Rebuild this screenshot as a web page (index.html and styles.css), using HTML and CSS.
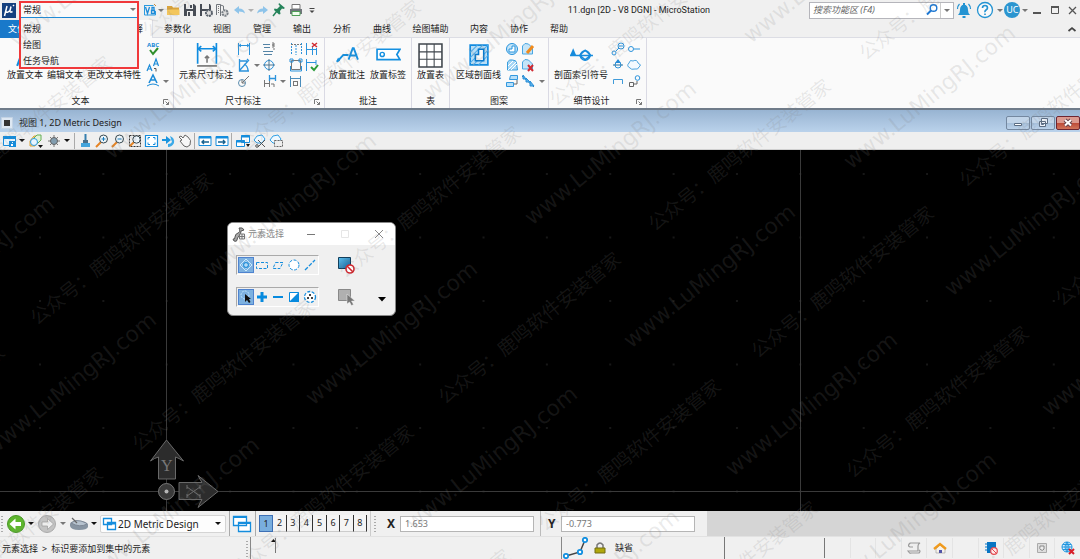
FILE: index.html
```html
<!DOCTYPE html>
<html lang="zh-CN">
<head>
<meta charset="utf-8">
<title>11.dgn [2D - V8 DGN] - MicroStation</title>
<link rel="stylesheet" href="styles.css">
</head>
<body>
<div class="app">
  <header class="titlebar">
    <div class="quick">
      <svg class="logo" viewBox="0 0 14 15"><path fill="#14407f" d="M0 0h14v15H0z"/><path d="M5 3 2.500 13M4 8.500q1 2 4-1L9 3.500M8 8q0 2 2.500.5M11 3l1-1" stroke="#fff" stroke-width="1.500" fill="none"/></svg>
      <div class="workflow">
        <select class="workflow-select" aria-label="工作流"><option>常规</option><option>绘图</option><option>任务导航</option></select>
        <i class="caret gray"></i>
        <ul class="workflow-menu"><li>常规</li><li>绘图</li><li>任务导航</li></ul>
      </div>
      <button class="tool" aria-label="V8"><svg class="ic" viewBox="0 0 16 16"><path d="M2.500 3.500h9M2.500 3v10h11V9" fill="none" stroke="#2a9be0"/><path d="m3.500 5 2 6.500 2-6.500M9.500 8.500h3v3h-3zM10 5.500h2v3h-2z" fill="none" stroke="#1d8bd8" stroke-width="1.300"/><path d="m12 2 2 2" stroke="#c78a3a"/></svg></button>
      <i class="caret gray"></i>
      <button class="tool wide" aria-label="打开"><svg class="ic" viewBox="0 0 16 16"><path d="M2 13V4h5l1 1.500h6V13z" fill="#d9a33c"/><path d="M2 13V7.500h12.500V13z" fill="#f3c65c"/></svg></button>
      <button class="tool" aria-label="保存"><svg class="ic" viewBox="0 0 16 16"><path d="M2 2h10l2 2v10H2z" fill="#474c55"/><path d="M4 2h7v5H4zM5 9h6v5H5z" fill="#eee"/><path d="M8 3h2v3H8zM6 10h2v4H6z" fill="#474c55"/></svg></button>
      <button class="tool" aria-label="保存设置"><svg class="ic" viewBox="0 0 16 16"><path d="M2 2h10l1 2v10H2z" fill="#474c55"/><path d="M4 2h7v5H4zM4 9h5v5H4z" fill="#eee"/><circle cx="11" cy="11" r="3" fill="#ddd" stroke="#59616b" stroke-width="2" stroke-dasharray="2 .7"/></svg></button>
      <button class="tool" aria-label="压缩"><svg class="ic" viewBox="0 0 16 16"><path d="M2.500 13V2.500h4V14M6.500 3l3 1v4" fill="none" stroke="#70757b"/><path d="M4.500 4v8" stroke="#777" stroke-dasharray="1"/><circle cx="11" cy="11" r="2.700" fill="#ddd" stroke="#7a8087" stroke-width="2" stroke-dasharray="2 .7"/></svg></button>
      <button class="tool wide" aria-label="撤销"><svg class="ic" viewBox="0 0 16 16"><path d="m3 8 5-4v2.500q5 0 6 5Q12 9.500 8 9.500V12z" fill="#8ec4ea"/></svg></button>
      <i class="caret light"></i>
      <button class="tool" aria-label="重做"><svg class="ic" viewBox="0 0 16 16"><path d="M14 8 9 4v2.500q-5 0-6 5 2-2 6-2V12z" fill="#8ec4ea"/></svg></button>
      <button class="tool wide" aria-label="固定"><svg class="ic" viewBox="0 0 16 16"><path d="m8 1 6 5-1.500 1L11 6.500 9 9l.5 3L8 12.500 3 8l.5-1.500L6 7l3-3-1.500-1.500z" fill="#25835a"/><path d="m6 9-4 5" stroke="#25835a" stroke-width="1.500"/></svg></button>
      <button class="tool" aria-label="打印"><svg class="ic" viewBox="0 0 16 16"><path d="M4 2.500h8V7H4z" fill="#fff" stroke="#777"/><path d="M2 7h12v5H2z" fill="#70757b"/><path d="M4 9.500h8v4H4z" fill="#f2fff0" stroke="#4d9e56"/></svg></button>
      <button class="tool" aria-label="自定义"><svg class="ic" viewBox="0 0 16 16"><path d="M5.500 6.500h5" stroke="#444"/><path d="M5.500 8.500h5L8 11z" fill="#444"/></svg></button>
    </div>
    <h1 class="doc-title">11.dgn [2D - V8 DGN] - MicroStation</h1>
    <div class="search">
      <input class="search-input" type="text" aria-label="搜索功能区" placeholder="搜索功能区 (F4)">
      <svg class="ic" viewBox="0 0 16 16"><circle cx="9.500" cy="6" r="3.300" fill="none" stroke="#1c77d2" stroke-width="1.400"/><path d="m7 8.500-4 4" stroke="#1c77d2" stroke-width="2"/></svg>
      <button class="search-more" aria-label="搜索选项"><i class="caret gray"></i></button>
    </div>
    <div class="account">
      <button class="tool round" aria-label="通知"><svg class="ic20" viewBox="0 0 20 20"><path d="M4 15q2-1.500 2-5 0-5 4-5.500Q14 5 14 10q0 3.500 2 5zM8.500 16h3v2h-3zM9 3h2v2H9z" fill="#2393d2"/><path d="M5.500 4Q3.500 6 3.500 9M14.500 4q2 2 2 5" fill="none" stroke="#2393d2" stroke-width="1.200"/></svg></button>
      <button class="tool round" aria-label="帮助"><svg class="ic20" viewBox="0 0 20 20"><circle cx="10" cy="10" r="7.500" fill="#fafafa" stroke="#2393d2" stroke-width="1.300"/><path d="M7.500 8q0-2.500 2.500-2.500T12.500 8q0 1-1.500 2t-1 2.300M10 13.500v1.600" fill="none" stroke="#2393d2" stroke-width="1.600"/></svg></button>
      <i class="caret gray"></i>
      <button class="avatar">UC</button>
      <i class="caret gray"></i>
      <button class="tool" aria-label="最小化"><svg class="ic" viewBox="0 0 16 16"><path d="M4 11h8" stroke="#555" stroke-width="2"/></svg></button>
      <button class="tool" aria-label="最大化"><svg class="ic" viewBox="0 0 16 16"><path d="M4.500 5v6.500h7V5" fill="none" stroke="#555"/><path d="M4 5h8" stroke="#555" stroke-width="2"/></svg></button>
      <button class="tool" aria-label="关闭"><svg class="ic" viewBox="0 0 16 16"><path d="m5 5 7 7m0-7-7 7" stroke="#555" stroke-width="1.300"/></svg></button>
    </div>
  </header>

  <nav class="tabs">
    <button class="tab file">文件</button>
    <button class="tab active">注释</button>
    <button class="tab t3">参数化</button><button class="tab">视图</button><button class="tab">管理</button><button class="tab">输出</button><button class="tab">分析</button><button class="tab">曲线</button><button class="tab t4">绘图辅助</button><button class="tab">内容</button><button class="tab">协作</button><button class="tab">帮助</button>
    <button class="collapse" aria-label="折叠功能区"><svg class="ic" viewBox="0 0 16 16"><path d="m4.500 10 3.500-3 3.500 3" fill="none" stroke="#444" stroke-width="1.700"/></svg></button>
  </nav>

  <section class="ribbon">
    <div class="group g-text">
      <div class="group-body">
        <button class="big"><svg class="ic24" viewBox="0 0 24 24"><path d="M4 22 11 3l7 19M7 15h8" fill="none" stroke="#0f8ce0" stroke-width="2"/></svg>放置文本</button>
        <button class="big"><svg class="ic24" viewBox="0 0 24 24"><path d="M4 22 11 3l7 19M7 15h8" fill="none" stroke="#0f8ce0" stroke-width="2"/></svg>编辑文本</button>
        <button class="big"><svg class="ic24" viewBox="0 0 24 24"><path d="M4 22 11 3l7 19M7 15h8" fill="none" stroke="#0f8ce0" stroke-width="2"/></svg>更改文本特性</button>
        <div class="small s-text">
          <svg class="ic" viewBox="0 0 16 16"><text class="abc" x="2" y="6">ABC</text><path d="m5 9 3 4 5-6" fill="none" stroke="#2f8f2b" stroke-width="2"/></svg><i></i>
          <svg class="ic" viewBox="0 0 16 16"><path d="m2 14 2.500-6L7 14M3 12h3M8.500 9 11 2l2.500 7M9.500 7h3" fill="none" stroke="#1b8bd8" stroke-width="1.200"/><path d="M9 11.500h2v3" fill="none" stroke="#555"/></svg><i></i>
          <svg class="ic" viewBox="0 0 16 16"><path d="m4 10 4-8 4 8M6 7h4" fill="none" stroke="#1b8bd8" stroke-width="1.600"/><path d="M2 13q6-4 12 0" fill="none" stroke="#1b8bd8"/></svg><i class="caret gray"></i>
        </div>
      </div>
      <div class="group-name">文本<svg class="launch" viewBox="0 0 8 8"><path d="M1.500 6V1.500H6M3.500 3.500l3 3M6.500 4v2.500H4" fill="none" stroke="#777"/></svg></div>
    </div>
    <div class="group g-dim">
      <div class="group-body">
        <button class="big"><svg class="ic24" viewBox="0 0 24 24"><path d="M3.500 0v20M21.500 0v20" stroke="#0f8ce0" stroke-width="1.600"/><path d="M5 5.500h15M7 3 4 5.500 7 8M18 3l3 2.500L18 8" fill="none" stroke="#0f8ce0" stroke-width="1.500"/><path d="M3 22h19" stroke="#777" stroke-width="1.600"/><path d="M12.500 19v-6M10.500 14.500l2-2 2 2" fill="none" stroke="#777" stroke-width="1.500"/></svg>元素尺寸标注</button>
        <div class="small s-dim">
          <svg class="ic" viewBox="0 0 16 16"><path d="M2.500 2v12M13.500 2v12M3 4.500h10M5 3 3 4.500 5 6m6-3 2 1.500L11 6" fill="none" stroke="#2b93dc"/></svg><i></i>
          <svg class="ic" viewBox="0 0 16 16"><path d="M2 3.500h7M3 6.500h6M2 10.500h10M3 13.500h8" stroke="#5484a6"/><path d="M11 2h2v2h-2 2v2h-2M12 8h2" fill="none" stroke="#777"/></svg><i></i>
          <svg class="ic" viewBox="0 0 16 16"><path d="M3.500 2v12M13.500 2v12M8 4v10" stroke="#2b93dc" stroke-dasharray="2 1"/><path d="M3 3.500h10" stroke="#777" stroke-dasharray="2 1"/></svg>
          <svg class="ic" viewBox="0 0 16 16"><path d="M2.500 2v12M8.500 5v9M12.500 7v7M3 8.500h9" fill="none" stroke="#2b93dc"/><path d="m8 2 5 4m0-4L8 6" stroke="#d22d32" stroke-width="1.500"/></svg>
          <svg class="ic" viewBox="0 0 16 16"><path d="M3.500 2v12H13M4 13l8-9M3 4h8m1 10q0-5-4-7M11 2l2 2" fill="none" stroke="#2b93dc" stroke-width="1.300"/></svg><i class="caret gray"></i>
          <svg class="ic" viewBox="0 0 16 16"><circle cx="8" cy="8" r="4.500" fill="none" stroke="#2b93dc"/><path d="M8 2v12M2 8h12" stroke="#50778f"/></svg><i></i>
          <svg class="ic" viewBox="0 0 16 16"><path d="M3.500 3.500h9v9h-9z" fill="none" stroke="#777"/><path d="M2 2h3v3H2zM11 2h3v3h-3zM2.500 9v5h11V9" fill="none" stroke="#2b93dc"/></svg>
          <svg class="ic" viewBox="0 0 16 16"><path d="M2.500 2v12M3 5.500h9M12 3v5" fill="none" stroke="#2b93dc"/><path d="m7 10 3 3 4-5" fill="none" stroke="#2a9b38" stroke-width="2"/></svg>
          <svg class="ic" viewBox="0 0 16 16"><circle cx="6" cy="10" r="3.500" fill="none" stroke="#5c8dae"/><path d="m6 10 7-7M6 7v3h3" fill="none" stroke="#777"/></svg><i></i>
          <svg class="ic" viewBox="0 0 16 16"><path d="M3.500 7v7M8.500 7v7M4 10.500h5M10 11h3v3" fill="none" stroke="#777"/><path d="M8.500 2v6M14.500 2v6M9 5.500h5" fill="none" stroke="#2b93dc" stroke-width="1.300"/></svg><i class="caret gray"></i>
          <svg class="ic" viewBox="0 0 16 16"><path d="M2.500 3v11M12.500 3v11M3 5.500h9" fill="none" stroke="#4a8dbc"/><path d="M5 8.500h5M5 12.500h5M5.500 8v5M9.500 8v5" stroke="#777"/></svg><i></i>
        </div>
      </div>
      <div class="group-name">尺寸标注<svg class="launch" viewBox="0 0 8 8"><path d="M1.500 6V1.500H6M3.500 3.500l3 3M6.500 4v2.500H4" fill="none" stroke="#777"/></svg></div>
    </div>
    <div class="group g-note">
      <div class="group-body">
        <button class="big"><svg class="ic24" viewBox="0 0 24 24"><path d="m2 18 6-6.500h5M13 16l4-11h1l4 11M15 12h5" fill="none" stroke="#1590e0" stroke-width="1.800"/><path d="m1 18 2-4 2 3z" fill="#1590e0"/></svg>放置批注</button>
        <button class="big"><svg class="ic24" viewBox="0 0 24 24"><path d="M1 6h22l-3 5 3 5H1z" fill="#fff" stroke="#1590e0" stroke-width="1.600"/><circle cx="6" cy="11" r="2" fill="none" stroke="#1590e0" stroke-width="1.400"/></svg>放置标签</button>
      </div>
      <div class="group-name">批注</div>
    </div>
    <div class="group g-table">
      <div class="group-body"><button class="big"><svg class="ic24" viewBox="0 0 24 24"><path d="M1 1h22v22H1z" fill="#fff" stroke="#3f454c" stroke-width="1.500"/><path d="M8.500 1v22M15.500 1v22M1 8.500h22M1 15.500h22" stroke="#3f454c"/></svg>放置表</button></div>
      <div class="group-name">表</div>
    </div>
    <div class="group g-pattern">
      <div class="group-body">
        <button class="big"><svg class="ic24" viewBox="0 0 24 24"><path d="M4 2h17v19H4z" fill="#b9def6" stroke="#128be0" stroke-width="1.600"/><path d="m4 9 7-7M4 14 16 2M4 19 21 2M7 21 21 7M12 21l9-9" stroke="#52ace8"/><path d="M12 6h5v11H9v-6h3z" fill="#fafafa" stroke="#0879cd" stroke-width="1.500"/></svg>区域剖面线</button>
        <div class="small s-pattern">
          <svg class="ic" viewBox="0 0 16 16"><circle cx="8" cy="8" r="5.500" fill="#c5e5f8" stroke="#2592dc"/><path d="M8 5h3v6H5V8h3z" fill="#fff" stroke="#2592dc"/></svg>
          <svg class="ic" viewBox="0 0 16 16"><path d="M2.500 13V5q2-4 6-2l4 4v6z" fill="#c5e5f8" stroke="#4aa6e2"/><path d="m7 12 6-7" stroke="#f08a1c" stroke-width="3"/></svg><i></i>
          <svg class="ic" viewBox="0 0 16 16"><path d="M3.500 13V5q2-3 5-2 4 0 4 3l1 7z" fill="#a8d7f5" stroke="#3c9fde"/><path d="m4 9 5-5M4 13l8-8m-5 8 6-6" stroke="#fff"/></svg>
          <svg class="ic" viewBox="0 0 16 16"><path d="M2.500 12V5q2-4 6-2l4 4v5z" fill="#c5e5f8" stroke="#4aa6e2"/><path d="m8 8 5 6m0-6-5 6" stroke="#d12a32" stroke-width="2"/></svg><i></i>
          <svg class="ic" viewBox="0 0 16 16"><path d="M6.500 2.500h7v4h-8zM2.500 9.500h7v4h-7z" fill="#b7dff8" stroke="#3298df"/><path d="M13 7v4h-3" fill="none" stroke="#666"/></svg>
          <svg class="ic" viewBox="0 0 16 16"><path d="m2 3 12 11" stroke="#386f98"/><path d="M3 2v4h3zM6 5v4h4zM10 8v5h4z" fill="#5cb0e9" stroke="#268ed8"/></svg><i class="caret gray"></i>
        </div>
      </div>
      <div class="group-name">图案</div>
    </div>
    <div class="group g-detail">
      <div class="group-body">
        <button class="big"><svg class="ic24" viewBox="0 0 24 24"><path d="M1 12h22M10 12l5.500-5 5.500 5-5.500 4z" fill="none" stroke="#168bdc" stroke-width="1.500"/><circle cx="15.500" cy="12" r="4.500" fill="none" stroke="#168bdc" stroke-width="1.500"/><path d="M1 12 4 5l3 7z" fill="#168bdc"/></svg>剖面索引符号</button>
        <div class="small s-detail">
          <svg class="ic" viewBox="0 0 16 16"><circle cx="11" cy="5" r="3" fill="#fff" stroke="#2b93dc"/><circle cx="4" cy="12" r="2" fill="#fff" stroke="#2b93dc"/><path d="m6 10 3-3M9 5h4" stroke="#2b93dc"/></svg>
          <svg class="ic" viewBox="0 0 16 16"><circle cx="5" cy="8" r="2.500" fill="none" stroke="#2b93dc"/><path d="M8 8h6" stroke="#2b93dc"/></svg>
          <svg class="ic" viewBox="0 0 16 16"><circle cx="8" cy="8" r="3" fill="none" stroke="#2b93dc"/><path d="M3 8h10" stroke="#26709f"/><path d="m8 2-3 4h6z" fill="#258bd7"/></svg>
          <svg class="ic" viewBox="0 0 16 16"><path d="M4 11Q0 9 3 6q1-4 4-2 4-2 5 2 4 2 1 4-1 3-4 2-4 1-5-1z" fill="#f3faff" stroke="#4aa3df"/></svg>
          <svg class="ic" viewBox="0 0 16 16"><path d="M3.500 11V6.500h9V11" fill="none" stroke="#409bd9"/></svg>
          <svg class="ic" viewBox="0 0 16 16"><path d="M3.500 9.500h4v4h-4zM8 11h3V8" fill="none" stroke="#666"/><circle cx="11.500" cy="5" r="2.300" fill="none" stroke="#2b93dc"/></svg>
        </div>
      </div>
      <div class="group-name">细节设计<svg class="launch" viewBox="0 0 8 8"><path d="M1.500 6V1.500H6M3.500 3.500l3 3M6.500 4v2.500H4" fill="none" stroke="#777"/></svg></div>
    </div>
  </section>

  <main class="view">
    <div class="view-title">
      <svg class="view-icon" viewBox="0 0 12 12"><path d="M.5.500h11v11H.5z" fill="#dde7f2" stroke="#c3d3e4"/><path d="M3 3h6v6H3z" fill="#333"/></svg>
      <h2 class="view-name">视图 1, 2D Metric Design</h2>
      <button class="win" aria-label="最小化视图"><svg class="ic" viewBox="0 0 16 16"><path d="M4.500 8.500h7v2h-7z" fill="#fff" stroke="#5b6c82"/></svg></button>
      <button class="win" aria-label="还原视图"><svg class="ic" viewBox="0 0 16 16"><path d="M6.500 3.500h6v5h-6zM4.500 6.500h6v5h-6z" fill="#eef3fa" stroke="#5b6c82"/><path d="M6.500 8.500h2v1h-2z" fill="#7a8ba0" stroke="#5b6c82"/></svg></button>
      <button class="win close" aria-label="关闭视图"><svg class="ic" viewBox="0 0 16 16"><path d="m5 5 6 5.500m0-5.500-6 5.500" stroke="#64404a" stroke-width="4"/><path d="m5 5 6 5.500m0-5.500-6 5.500" stroke="#fff" stroke-width="2"/></svg></button>
    </div>
    <div class="view-tools">
      <div class="tools-a">
        <svg class="ic" viewBox="0 0 16 16"><path d="M2.500 3.500h12v9h-12z" fill="#e9f5fd" stroke="#148ddd"/><path d="M2 3h13v3H2z" fill="#148ddd"/><path d="M8 8h7v6H8z" fill="#148ddd"/><path d="M11 9h1v1h-1zM10 11h2v2h-2z" fill="#fff"/></svg><i class="caret black"></i>
        <svg class="ic" viewBox="0 0 16 16"><path d="m2 8 4-5h5v5l-4 5H2z" fill="#f1d5a0" stroke="#dda332"/><path d="m6 5 3-3h4v5l-3 3H6z" fill="#dff3d9" stroke="#67ae55"/><circle cx="6" cy="9" r="3.500" fill="#e8f5ff" stroke="#2a9be0"/><path d="M10 12h5l-2.500 3z" fill="#111"/></svg>
        <svg class="ic" viewBox="0 0 16 16"><path d="M8 2v12M2 8h12M4 4l8 8m0-8-8 8" stroke="#777"/><circle cx="8" cy="8" r="3.500" fill="#829daf" stroke="#666"/></svg><i class="caret black"></i>
      </div>
      <div class="tools-b">
        <svg class="ic" viewBox="0 0 16 16"><path d="M8.500 1v7" stroke="#367fae" stroke-width="2"/><path d="M6 7h5v3H6z" fill="#4a6f89"/><path d="M4 10h9v4H4z" fill="#42a4dc"/></svg>
        <svg class="ic" viewBox="0 0 16 16"><path d="m7 9-5 5" stroke="#e68324" stroke-width="2"/><circle cx="9.500" cy="6" r="4" fill="#eef6fb" stroke="#37474f"/><path d="M7.500 6h4m-2-2v4" stroke="#167bbd"/></svg>
        <svg class="ic" viewBox="0 0 16 16"><path d="m7 9-5 5" stroke="#e68324" stroke-width="2"/><circle cx="9.500" cy="6" r="4" fill="#eef6fb" stroke="#37474f"/><path d="M7.500 6h4" stroke="#167bbd"/></svg>
        <svg class="ic" viewBox="0 0 16 16"><path d="M2.500 2.500h11v11h-11z" fill="none" stroke="#333" stroke-dasharray="2 1"/><path d="m7 9-4 4" stroke="#e68324" stroke-width="2"/><circle cx="9.500" cy="6.500" r="3.700" fill="#eef6fb" stroke="#37474f"/></svg>
        <svg class="ic" viewBox="0 0 16 16"><path d="M2.500 2.500h12v11h-12z" fill="#fff" stroke="#148ddd" stroke-width="1.200"/><path d="M5 6.500v-2h2m3 0h2v2m0 3v2h-2m-3 0H5v-2" fill="none" stroke="#148ddd"/></svg>
        <svg class="ic" viewBox="0 0 16 16"><path d="M2 6h4V3l5 4-5 4V8H2z" fill="#1995e0"/><path d="M10 3q5 2 4 7-2 4-6 4v-3q3 0 4-2z" fill="#3caae8"/></svg>
        <svg class="ic" viewBox="0 0 16 16"><path d="m3 4 2-1 2 2 2-3 3 2q4 3 2 8l-3 2-3-1-4-5 2-1z" fill="#f7f7f7" stroke="#666"/></svg>
      </div>
      <div class="tools-c">
        <svg class="ic" viewBox="0 0 16 16"><path d="M2 3.500h12v9H2z" fill="#fff" stroke="#148ddd"/><path d="M2 4.500h12" stroke="#148ddd" stroke-width="2"/><path d="M12 9H5m2-2L5 9l2 2" fill="none" stroke="#17618e" stroke-width="1.400"/></svg>
        <svg class="ic" viewBox="0 0 16 16"><path d="M2 3.500h12v9H2z" fill="#fff" stroke="#148ddd"/><path d="M2 4.500h12" stroke="#148ddd" stroke-width="2"/><path d="M4 9h7M9 7l2 2-2 2" fill="none" stroke="#17618e" stroke-width="1.400"/></svg>
      </div>
      <div class="tools-d">
        <svg class="ic" viewBox="0 0 16 16"><path d="M6.500 2.500h8v7h-8zM1.500 7.500h8v6h-8z" fill="#fff" stroke="#148ddd"/><path d="M6 3.500h9M1 8.500h9" stroke="#148ddd" stroke-width="2"/><path d="M11 11h4l-2 3z" fill="#111"/></svg>
        <svg class="ic" viewBox="0 0 16 16"><path d="m2 7 3-4 5-1 3 4-3 4H5z" fill="#eef8ff" stroke="#31a0e5"/><path d="m6 7 7 7m0-7-7 7" stroke="#555"/><circle cx="5" cy="13" r="1.300" fill="none" stroke="#555"/></svg>
        <svg class="ic" viewBox="0 0 16 16"><path d="m2 7 3-4 5-1 3 4-3 4H5z" fill="#eef8ff" stroke="#31a0e5"/><path d="M6.500 7.500h8v6h-8z" fill="#eee" stroke="#666" stroke-dasharray="2 1"/></svg>
      </div>
    </div>
    <div class="canvas">
      <svg class="drawing" aria-label="绘图区">
        <defs><pattern id="dots" x="39" y="23" width="63.360" height="63.500" patternUnits="userSpaceOnUse"><path d="M.5 1h1" stroke="#5d5d5d"/></pattern></defs>
        <rect width="100%" height="100%" fill="#000"/>
        <rect width="100%" height="100%" fill="url(#dots)"/>
        <path d="M166.500 0v3000M800.500 0v3000M0 341.500h4000" stroke="#3a3a3a"/>
        <path d="m166.500 290 17 21q-5-3-8-4v22h-17v-22q-4 1-8 4zM218 341.500l-20 16q2-5 4-8h-23v-17h23q-2-3-4-7z" fill="#2c2c2c" stroke="#696969"/>
        <circle cx="166.500" cy="341.500" r="8" fill="#3a3a3a" stroke="#777"/><circle cx="166.500" cy="341.500" r="2" fill="#b5b5b5"/>
        <text class="axis" x="161" y="321">Y</text>
        <path d="m187 337 13 9m0-9-13 9m0-11v4m13-4v4m-13 5v4m13-4v4" stroke="#6c6c6c"/>
      </svg>
      <section class="dialog">
        <div class="dialog-head">
          <svg class="ic" viewBox="0 0 16 16"><path d="M2 13q2 1 2-2t3-4 1-5q4-1 5 2l-3 1q0 3-2 5t-2 4-3 1z" fill="#aaa" stroke="#555"/><path d="M8.500 8h5v5h-5zM11 8v5M8 10.500h5" fill="#eee" stroke="#777"/></svg>
          <h3 class="dialog-title">元素选择</h3>
          <button class="dialog-btn" aria-label="最小化"><svg class="ic" viewBox="0 0 16 16"><path d="M4 8.500h8" stroke="#777"/></svg></button>
          <button class="dialog-btn" aria-label="最大化"><svg class="ic" viewBox="0 0 16 16"><path d="M4.500 4.500h7v7h-7z" fill="none" stroke="#e6e6e6"/></svg></button>
          <button class="dialog-btn" aria-label="关闭"><svg class="ic" viewBox="0 0 16 16"><path d="m4 4 8 8m0-8-8 8" stroke="#888"/></svg></button>
        </div>
        <div class="dialog-row">
          <div class="palette">
            <button class="pick on" aria-label="单个"><svg class="ic" viewBox="0 0 16 16"><path d="m8 2 6 6-6 6-6-6zM8 4v8M4 8h8" fill="none" stroke="#c8eaff"/><circle cx="8" cy="8" r="2.500" fill="none" stroke="#168cda"/></svg></button>
            <button class="pick" aria-label="块"><svg class="ic" viewBox="0 0 16 16"><path d="M2.500 5.500h11v6h-11z" fill="none" stroke="#158ddd" stroke-dasharray="3 1.500"/></svg></button>
            <button class="pick" aria-label="形状"><svg class="ic" viewBox="0 0 16 16"><path d="M5.500 5.500H13l-3 6H3z" fill="none" stroke="#158ddd" stroke-dasharray="3 1.500"/></svg></button>
            <button class="pick" aria-label="圆"><svg class="ic" viewBox="0 0 16 16"><circle cx="8" cy="8" r="5" fill="#fff" stroke="#158ddd" stroke-dasharray="3 1.500"/></svg></button>
            <button class="pick" aria-label="线"><svg class="ic" viewBox="0 0 16 16"><path d="M3 13 13 3" stroke="#158ddd" stroke-width="1.300" stroke-dasharray="4 1.500"/></svg></button>
          </div>
          <svg class="ic20" viewBox="0 0 20 20"><defs><linearGradient id="sel" x1="0" y1="0" x2="1" y2="1"><stop offset="0" stop-color="#5cc0f0"/><stop offset="1" stop-color="#155f94"/></linearGradient></defs><path d="M3.500 2.500h12v11h-12z" fill="url(#sel)" stroke="#123e5b"/><circle cx="15" cy="14" r="4" fill="#fff" stroke="#d4252d" stroke-width="1.600"/><path d="m12 11 6 6" stroke="#d4252d" stroke-width="1.600"/></svg>
        </div>
        <div class="dialog-row">
          <div class="palette">
            <button class="pick on" aria-label="新建"><svg class="ic" viewBox="0 0 16 16"><circle cx="7" cy="6" r="4" fill="none" stroke="#c0e6ff" stroke-dasharray="2 1"/><path d="M7 5v8l2-2 2 3 1.500-1L11 10h2z" fill="#111"/></svg></button>
            <button class="pick" aria-label="添加"><svg class="ic" viewBox="0 0 16 16"><path d="M8 3v10M3 8h10" stroke="#078ade" stroke-width="3"/></svg></button>
            <button class="pick" aria-label="减去"><svg class="ic" viewBox="0 0 16 16"><path d="M3 8h10" stroke="#078ade" stroke-width="2"/></svg></button>
            <button class="pick" aria-label="反转"><svg class="ic" viewBox="0 0 16 16"><path d="M3.500 3.500h9v9h-9z" fill="#fff" stroke="#078ade"/><path d="M13 3v10H3z" fill="#078ade"/></svg></button>
            <button class="pick" aria-label="全部"><svg class="ic" viewBox="0 0 16 16"><circle cx="8" cy="8" r="5.500" fill="#fff" stroke="#158ddd" stroke-width="1.300" stroke-dasharray="3 1.500"/><path d="M7 5h2v2H7zM5 8h2v2H5zM9 8h2v2H9z" fill="#444"/></svg></button>
          </div>
          <svg class="ic20" viewBox="0 0 20 20"><path d="M3.500 2.500h12v11h-12z" fill="#b0b0b0" stroke="#888"/><path d="M12 7v10l2.500-2 2 3.500 2-1-2-3.500H20z" fill="#777" stroke="#eee" stroke-width=".5"/></svg>
          <svg class="ic more" viewBox="0 0 16 16"><path d="M4 6h8l-4 4.500z" fill="#000"/></svg>
        </div>
      </section>
    </div>
  </main>

  <div class="bottom">
    <div class="nav-tools">
      <i class="grip"></i>
      <svg class="ic20" viewBox="0 0 20 20"><circle cx="10" cy="10" r="8.500" fill="#5eb62d" stroke="#499728"/><path d="m3.500 10 6-5.500V8H15v4H9.500v3.500z" fill="#fff"/></svg><i class="caret black"></i>
      <svg class="ic20" viewBox="0 0 20 20"><circle cx="10" cy="10" r="8.500" fill="#c3c3c3" stroke="#aaa"/><path d="m16.500 10-6-5.500V8H5v4h5.500v3.500z" fill="#eee" stroke="#999" stroke-width=".7"/></svg><i class="caret gray"></i>
      <svg class="ic20" viewBox="0 0 20 20"><path d="M1 10q0-3 8-3t10 3v3q-1 3-9 3t-9-4z" fill="#8794a2"/><path d="M2 9q4-4 10-2t6 3q-7 4-16-1z" fill="#b6c2ce" stroke="#7d8896"/><path d="m3 4 5 5" stroke="#666" stroke-width="1.300"/></svg><i class="caret black"></i>
      <div class="model"><svg class="ic" viewBox="0 0 16 16"><path d="M2.500 2.500h8v6h-8zM6.500 6.500h8v7h-8z" fill="#fff" stroke="#148ddd" stroke-width="1.300"/><path d="M6 7.500h9" stroke="#148ddd" stroke-width="2"/></svg><select class="model-select" aria-label="模型"><option>2D Metric Design</option></select><i class="caret black"></i></div>
      <i class="sep"></i>
      <svg class="ic20" viewBox="0 0 20 20"><path d="M1.500 2.500h13v9h-13zM6.500 8.500h12v9h-12z" fill="#fff" stroke="#148ddd" stroke-width="1.300"/><path d="M1 3h14M6 9h13" stroke="#148ddd" stroke-width="2"/></svg>
      <i class="sep"></i>
      <div class="views"><button class="vn on">1</button><button class="vn">2</button><button class="vn">3</button><button class="vn">4</button><button class="vn">5</button><button class="vn">6</button><button class="vn">7</button><button class="vn">8</button></div>
    </div>
    <div class="coord"><i class="grip"></i><label class="coord-label" for="cx">X</label><input class="coord-input" id="cx" type="text" value="1.653"></div>
    <div class="coord second"><label class="coord-label" for="cy">Y</label><input class="coord-input" id="cy" type="text" value="-0.773"></div>
  </div>

  <footer class="status">
    <p class="prompt">元素选择 <span class="arrow">&gt;</span> 标识要添加到集中的元素<i class="grip"></i></p>
    <div class="message"><svg class="ic" viewBox="0 0 16 16"><path d="m6 5 2.500-3L11 5z" fill="#111"/><path d="M10.500 1v15" stroke="#777"/></svg></div>
    <div class="snap"><svg class="snap-icon" viewBox="0 0 26 22"><path d="m4 19 14-4 5-12" fill="none" stroke="#444" stroke-width="1.500"/><g fill="#fff" stroke="#118fe0" stroke-width="1.800"><circle cx="4" cy="19" r="2.200"/><circle cx="18" cy="15" r="2.200"/><circle cx="23" cy="3" r="2.200"/></g></svg><svg class="ic" viewBox="0 0 16 16"><path d="M5 8V5q3-4 6 0v3" fill="none" stroke="#777" stroke-width="1.500"/><path d="M3 8h10v5H3z" fill="#b0a80c" stroke="#726d13"/></svg><span class="level">缺省</span></div>
    <div class="blank"></div>
    <div class="cells">
      <span class="cell"></span><span class="cell"></span><span class="cell"></span>
      <span class="cell"><svg class="ic" viewBox="0 0 16 16"><path d="M4 3h10q-2 1-2 3v5H2q2 3 3 2h8q2-2 0-3M4 3q-3 3 0 4h3" fill="#eee" stroke="#999" stroke-width="1.200"/></svg></span>
      <span class="cell"><svg class="ic" viewBox="0 0 16 16"><path d="M4 9l4-4 5 4v4H4z" fill="#f7f2e9" stroke="#999" stroke-width=".6"/><path d="m2 9 6-5 6 5" fill="none" stroke="#f09a1c" stroke-width="2.300"/><path d="M7 10h3v3H7z" fill="#5154a8"/></svg></span>
      <span class="cell"></span>
      <span class="cell"><svg class="ic" viewBox="0 0 16 16"><path d="M4 2h9v11H4z" fill="#0875c3"/><path d="M2 4h3M2 7h3M2 10h3" stroke="#0875c3"/><circle cx="11" cy="11" r="3.300" fill="#ffe9e9" stroke="#e34a50" stroke-width="1.200"/><path d="m9 9 4 4" stroke="#e34a50"/></svg></span>
      <span class="cell"></span>
      <span class="cell"><svg class="ic" viewBox="0 0 16 16"><path d="M3.500 3.500h9v9h-9z" fill="#ddd" stroke="#aaa"/><path d="M6 6h4v3q-1 2-3 1-2-1-1-4" fill="#eee" stroke="#888"/></svg></span>
      <span class="cell"><svg class="ic" viewBox="0 0 16 16"><circle cx="7" cy="7" r="5" fill="#dff2fd" stroke="#2196df"/><path d="M2 7h10M7 2v10M3 4.500h8M3 9.500h8M7 2q-4 5 0 10m0-10q4 5 0 10" fill="none" stroke="#2196df"/><path d="m9 9 5 5m0-5-5 5" stroke="#d71e28" stroke-width="2"/></svg></span>
    </div>
  </footer>

  <svg class="watermark" aria-hidden="true">
    <g class="wm-url">
      <text transform="translate(17 48) rotate(-39)">www.LuMingRJ.com</text>
      <text transform="translate(112 160) rotate(-39)">www.LuMingRJ.com</text>
      <text transform="translate(212 278) rotate(-39)">www.LuMingRJ.com</text>
      <text transform="translate(313 406) rotate(-39)">www.LuMingRJ.com</text>
      <text transform="translate(413 531) rotate(-39)">www.LuMingRJ.com</text>
      <text transform="translate(515 654) rotate(-39)">www.LuMingRJ.com</text>
      <text transform="translate(431 100) rotate(-39)">www.LuMingRJ.com</text>
      <text transform="translate(532 226) rotate(-39)">www.LuMingRJ.com</text>
      <text transform="translate(631 349) rotate(-39)">www.LuMingRJ.com</text>
      <text transform="translate(733 477) rotate(-39)">www.LuMingRJ.com</text>
      <text transform="translate(832 597) rotate(-39)">www.LuMingRJ.com</text>
      <text transform="translate(751 44) rotate(-39)">www.LuMingRJ.com</text>
      <text transform="translate(851 170) rotate(-39)">www.LuMingRJ.com</text>
      <text transform="translate(952 297) rotate(-39)">www.LuMingRJ.com</text>
      <text transform="translate(1049 417) rotate(-39)">www.LuMingRJ.com</text>
      <text transform="translate(-110 341) rotate(-39)">www.LuMingRJ.com</text>
      <text transform="translate(-8 457) rotate(-39)">www.LuMingRJ.com</text>
      <text transform="translate(95 582) rotate(-39)">www.LuMingRJ.com</text>
    </g>
    <g class="wm-name">
      <text transform="translate(-64 209) rotate(-39)">公众号：鹿鸣软件安装管家</text>
      <text transform="translate(37 326) rotate(-39)">公众号：鹿鸣软件安装管家</text>
      <text transform="translate(139 452) rotate(-39)">公众号：鹿鸣软件安装管家</text>
      <text transform="translate(238 578) rotate(-39)">公众号：鹿鸣软件安装管家</text>
      <text transform="translate(335 702) rotate(-39)">公众号：鹿鸣软件安装管家</text>
      <text transform="translate(-171 498) rotate(-39)">公众号：鹿鸣软件安装管家</text>
      <text transform="translate(-73 620) rotate(-39)">公众号：鹿鸣软件安装管家</text>
      <text transform="translate(149 38) rotate(-39)">公众号：鹿鸣软件安装管家</text>
      <text transform="translate(245 153) rotate(-39)">公众号：鹿鸣软件安装管家</text>
      <text transform="translate(345 279) rotate(-39)">公众号：鹿鸣软件安装管家</text>
      <text transform="translate(445 405) rotate(-39)">公众号：鹿鸣软件安装管家</text>
      <text transform="translate(545 532) rotate(-39)">公众号：鹿鸣软件安装管家</text>
      <text transform="translate(642 654) rotate(-39)">公众号：鹿鸣软件安装管家</text>
      <text transform="translate(556 107) rotate(-39)">公众号：鹿鸣软件安装管家</text>
      <text transform="translate(655 232) rotate(-39)">公众号：鹿鸣软件安装管家</text>
      <text transform="translate(758 359) rotate(-39)">公众号：鹿鸣软件安装管家</text>
      <text transform="translate(853 479) rotate(-39)">公众号：鹿鸣软件安装管家</text>
      <text transform="translate(952 604) rotate(-39)">公众号：鹿鸣软件安装管家</text>
      <text transform="translate(866 61) rotate(-39)">公众号：鹿鸣软件安装管家</text>
      <text transform="translate(966 188) rotate(-39)">公众号：鹿鸣软件安装管家</text>
      <text transform="translate(1062 307) rotate(-39)">公众号：鹿鸣软件安装管家</text>
    </g>
  </svg>
</div>
</body>
</html>
```
FILE: styles.css
```css
* { box-sizing: border-box; }
body { margin: 0; font: 9px/14px "Noto Sans", "Noto Sans CJK SC", sans-serif; color: #222; }
button, input, select { font: inherit; color: inherit; margin: 0; padding: 0; border: 0; background: none; }
h1, h2, h3, p, ul { margin: 0; padding: 0; font: inherit; list-style: none; }
svg { display: block; flex: none; }
.app { position: relative; display: flex; flex-direction: column; min-height: 100vh; overflow: hidden; background: #f0f0f0; }
.ic { width: 16px; height: 16px; }
.ic20 { width: 20px; height: 20px; }
.ic24 { width: 25px; height: 25px; }
.caret { flex: none; width: 6px; border: solid transparent; border-width: 3px 3px 0; border-top-color: #777; height: 3px; }
.caret.black { border-top-color: #111; }
.caret.light { border-top-color: #b0b0b0; }
.sep { width: 1px; align-self: stretch; background: #aaa; }

/* title bar */
.titlebar { display: flex; align-items: center; height: 20px; }
.quick { display: flex; align-items: center; }
.logo { width: 14px; height: 15px; margin: 0 4px 0 2px; }
.workflow { position: relative; display: flex; align-items: center; width: 119px; height: 16px; margin-right: 3px; padding-right: 3px; border-bottom: 1px solid #1d8bd8; background: #fafafa; }
.workflow-select { flex: 1; height: 14px; padding-left: 3px; appearance: none; }
.workflow-menu { position: absolute; z-index: 3; top: -1px; left: -1px; width: 120px; height: 68px; padding: 18px 0 0 2px; border: 2px solid #f0383a; line-height: 16px; pointer-events: none; }
.workflow-menu::before { content: ""; position: absolute; z-index: -1; inset: 17px 0 0; background: #f4f4f4; }
.tool { width: 16px; height: 18px; display: flex; align-items: center; justify-content: center; }
.tool.wide { width: 18px; }
.tool.round { width: 20px; }
.doc-title { flex: 1; text-align: right; padding-right: 99px; white-space: nowrap; font-family: Roboto, "Noto Sans", sans-serif; }
.search { display: flex; align-items: center; width: 145px; height: 17px; border: 1px solid #b5b5bb; background: #fff; }
.search-input { flex: 1; min-width: 0; padding-left: 3px; font-style: italic; }
.search-input::placeholder { color: #666; opacity: 1; }
.search-more { display: flex; align-items: center; justify-content: center; width: 13px; height: 15px; border-left: 1px solid #ccc; }
.account { display: flex; align-items: center; width: 126px; justify-content: space-between; }
.avatar { width: 16px; height: 16px; border-radius: 50%; background: #2b95d0; color: #fff; }

/* tabs */
.tabs { display: flex; height: 18px; border-bottom: 1px solid #dcdde4; }
.tab { width: 40px; height: 18px; text-align: center; white-space: nowrap; }
.tab.file { width: 34px; background: #1979ca; color: #fff; }
.tab.active { width: 119px; padding-left: 82px; background: #fafafa; border-right: 1px solid #dcdde4; }
.tab.t3 { width: 49px; }
.tab.t4 { width: 57px; }
.collapse { margin-left: auto; height: 18px; }

/* ribbon */
.ribbon { display: flex; height: 70px; background: #fafafa; }
.group { display: flex; flex-direction: column; border-right: 1px solid #dadae4; }
.group-body { display: flex; flex: 1; align-items: flex-start; }
.group-name { display: flex; justify-content: center; position: relative; height: 14px; }
.launch { position: absolute; right: 3px; top: 4px; width: 8px; height: 8px; }
.big { display: flex; flex-direction: column; align-items: center; padding-top: 5px; white-space: nowrap; }
.small { display: grid; grid-auto-rows: 16px; align-items: center; justify-items: center; padding-top: 3px; }
.abc { font-size: 6px; font-weight: bold; fill: #1b8bd8; }
.g-text { width: 174px; }
.g-text .group-body { padding-left: 7px; gap: 4px; }
.g-text .group-name { padding-right: 12px; }
.s-text { grid-template-columns: 16px 10px; }
.g-dim { width: 151px; }
.g-dim .group-body { padding-left: 5px; gap: 3px; }
.g-dim .group-name { padding-right: 12px; }
.s-dim { grid-template-columns: 16px 9px 16px 11px 16px 16px; }
.g-note { width: 87px; }
.g-note .group-body { padding-left: 4px; gap: 5px; }
.g-table { width: 38px; }
.g-table .group-body { justify-content: center; }
.g-pattern { width: 99px; }
.g-pattern .group-body { padding-left: 6px; gap: 3px; }
.s-pattern { grid-template-columns: 16px 16px 12px; }
.g-detail { width: 98px; }
.g-detail .group-body { padding-left: 5px; gap: 2px; }
.g-detail .group-name { padding-right: 12px; }
.s-detail { grid-template-columns: 16px 16px; }

/* view window */
.view { display: flex; flex-direction: column; flex: 1; border-top: 2px solid #6f7b89; }
.view-title { display: flex; align-items: center; height: 22px; padding-top: 3px; padding-left: 1px; background: linear-gradient(#98b4d2, #bad2eb); }
.view-icon { width: 12px; height: 12px; margin-right: 6px; }
.view-name { flex: 1; }
.win { display: flex; align-items: center; justify-content: center; width: 24px; height: 14px; margin-left: 1px; border: 1px solid #7488a0; border-radius: 2px; background: linear-gradient(#c2d5e9 50%, #a5bfda 50%, #bbd2ea); }
.win.close { border-color: #6e2530; background: linear-gradient(#dc9a90 50%, #bd4937 50%, #d0745b); }
.view-tools { display: flex; align-items: center; height: 18px; background: #efefef; border-bottom: 1px solid #d0d0d0; }
.view-tools > div { display: flex; align-items: center; justify-content: space-between; }
.view-tools > div + div { border-left: 1px solid #aaa; }
.tools-a { width: 74px; padding: 0 4px 0 1px; }
.tools-b { width: 120px; padding: 0 2px; }
.tools-c { width: 37px; padding: 0 1px 0 2px; }
.tools-d { width: 54px; padding: 0 1px 0 3px; }
.canvas { position: relative; flex: 1; min-height: 300px; background: #000; }
.drawing { position: absolute; inset: 0; width: 100%; height: 100%; }
.axis { font: 16px "Liberation Serif", serif; fill: #777; }

/* element selection dialog */
.dialog { position: absolute; left: 227px; top: 72px; width: 169px; padding-bottom: 6px; border: 1px solid #888; border-radius: 6px; background: #f0f0f0; overflow: hidden; }
.dialog-head { display: flex; align-items: center; height: 22px; padding: 0 8px 0 3px; background: #fff; color: #888; }
.dialog-title { flex: 1; padding-left: 1px; }
.dialog-btn { width: 16px; height: 16px; margin-left: 18px; }
.dialog-btn:first-of-type { margin-left: 0; }
.dialog-row { display: flex; align-items: center; padding: 10px 0 2px 8px; height: 32px; }
.dialog-row > .ic20 { margin-left: 16px; }
.palette { display: flex; width: 83px; height: 20px; padding: 1px; border: 1px solid #aaa; border-right-color: #fff; border-bottom-color: #fff; }
.pick { width: 16px; height: 16px; }
.pick.on { background: #7db1e0; outline: 1px solid #4f83cf; outline-offset: -1px; }
.more { margin-left: 19px; align-self: flex-end; }

/* bottom bars */
.bottom { display: flex; height: 26px; background: #d5d5d5; border-bottom: 1px solid #e2e2e2; }
.nav-tools { display: flex; align-items: center; justify-content: space-between; width: 371px; padding: 0 3px 0 1px; background: #f0f0f0; border-right: 1px solid #ccc; }
.grip { width: 2px; height: 16px; background: repeating-linear-gradient(#aaa 0 1px, transparent 1px 3px); }
.model { display: flex; align-items: center; width: 126px; height: 18px; padding: 0 4px 0 0; border: 1px solid #d4d4d4; border-radius: 2px; background: #fdfdfd; }
.model-select { flex: 1; min-width: 0; padding-left: 1px; appearance: none; font-size: 10px; }
.views { display: flex; width: 108px; height: 17px; }
.vn { flex: 1; border-right: 1px solid #333; border-bottom: 1px solid #ccc; background: #f4f4f4; }
.vn.on { background: #79aede; border: 1px solid #3e70b5; }
.coord { display: flex; align-items: center; width: 170px; padding-left: 3px; background: #f0f0f0; border-right: 1px solid #bbb; }
.coord.second { width: 166px; padding-left: 7px; border: 0; }
.coord-label { width: 12px; margin-right: 1px; font-size: 12px; font-weight: bold; }
.grip + .coord-label { margin-left: 11px; }
.coord-input { width: 134px; height: 16px; padding-left: 4px; border: 1px solid #b5b5b5; background: #fff; color: #777; }
.status { display: flex; align-items: center; height: 22px; white-space: nowrap; }
.prompt { display: flex; align-items: center; width: 251px; height: 22px; padding: 2px 2px 0; border-right: 1px solid #888; }
.prompt .grip { margin-left: auto; }
.arrow { margin: 0 4px; }
.message { flex: 1; min-width: 100px; height: 22px; padding-left: 14px; border-right: 1px solid #888; }
.snap { display: flex; align-items: center; width: 163px; height: 22px; border-right: 1px solid #777; }
.snap-icon { width: 26px; height: 22px; margin-right: 4px; }
.level { padding-left: 7px; }
.blank { width: 100px; height: 20px; border-right: 1px solid #777; }
.cells { display: flex; width: 255px; height: 20px; }
.cell { flex: 1; display: flex; align-items: center; justify-content: center; border-right: 1px solid #e4e4e4; }
.cell:last-child { border: 0; }

.watermark { position: absolute; z-index: 5; inset: 0; width: 100%; height: 100%; pointer-events: none; fill: rgba(128, 128, 128, .16); }
.wm-url { font: 22px "DejaVu Sans", sans-serif; }
.wm-name { font: 19px "Noto Sans CJK SC", sans-serif; }
```
